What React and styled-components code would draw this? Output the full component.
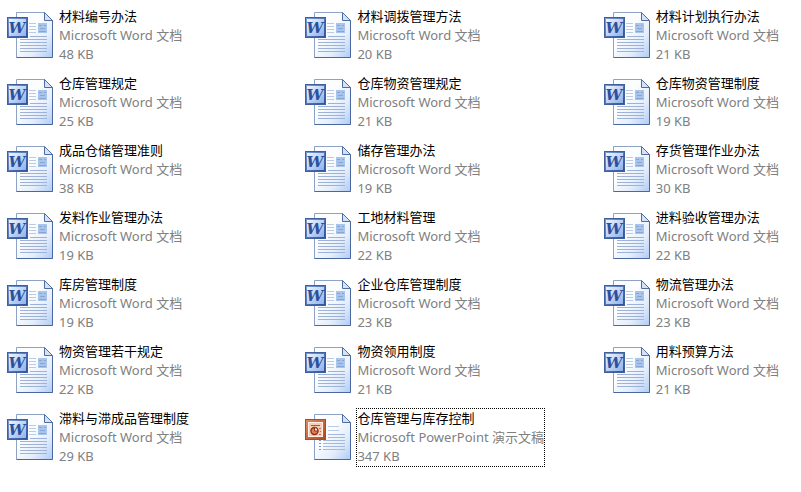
import React, { useState } from "react";
import styled, { createGlobalStyle } from "styled-components";

const files = [
  { name: "材料编号办法", size: "48 KB" },
  { name: "材料调拨管理方法", size: "20 KB" },
  { name: "材料计划执行办法", size: "21 KB" },
  { name: "仓库管理规定", size: "25 KB" },
  { name: "仓库物资管理规定", size: "21 KB" },
  { name: "仓库物资管理制度", size: "19 KB" },
  { name: "成品仓储管理准则", size: "38 KB" },
  { name: "储存管理办法", size: "19 KB" },
  { name: "存货管理作业办法", size: "30 KB" },
  { name: "发料作业管理办法", size: "19 KB" },
  { name: "工地材料管理", size: "22 KB" },
  { name: "进料验收管理办法", size: "22 KB" },
  { name: "库房管理制度", size: "19 KB" },
  { name: "企业仓库管理制度", size: "23 KB" },
  { name: "物流管理办法", size: "23 KB" },
  { name: "物资管理若干规定", size: "22 KB" },
  { name: "物资领用制度", size: "21 KB" },
  { name: "用料预算方法", size: "21 KB" },
  { name: "滞料与滞成品管理制度", size: "29 KB" },
  { name: "仓库管理与库存控制", size: "347 KB", kind: "ppt" },
];

const typeNames = {
  word: "Microsoft Word 文档",
  ppt: "Microsoft PowerPoint 演示文稿",
};

const Page = () => (
  <>
    <path d="M10.5 1.5H38.5L46.5 9.5V46.5H10.5Z" fill="url(#paper)" stroke="#8da2c4" />
    <path d="M46.5 9.5V46.5H10.5" fill="none" stroke="#4a689f" />
    <path d="M38.5 1.5V9.5H46.5Z" fill="#d3e2f8" stroke="#4f6da3" strokeLinejoin="round" />
  </>
);

const WordIcon = () => (
  <Icon viewBox="0 0 48 48" aria-hidden="true">
    <Page />
    <path
      d="M23 12.5H30M23 15.5H30M23 18.5H30M23 21.5H30"
      stroke="#bccbe4"
    />
    <path
      d="M24 25.5H41M14 28.5H41M14 31.5H41M14 34.5H41M14 37.5H41M14 40.5H41"
      stroke="#9db2d6"
    />
    <rect x="32" y="12" width="9" height="10" fill="#a9c4ea" />
    <path d="M33 14.5H36M38 14.5H40M34 17.5H39M33 20.5H40" stroke="#86a6d8" />
    <rect x="1.5" y="6.5" width="20" height="20" fill="url(#blue)" stroke="#3f5f9f" />
    <rect x="3" y="8" width="17" height="17" fill="url(#badge)" />
    <WordLetter x="11" y="22" textAnchor="middle">
      W
    </WordLetter>
  </Icon>
);

const PowerPointIcon = () => (
  <Icon viewBox="0 0 48 48" aria-hidden="true">
    <Page />
    <path d="M24 13.5H35M24 17.5H35" stroke="#bccbe4" />
    <path
      d="M24 21.5H41M24 24.5H41M19 27.5H41M19 30.5H41M19 33.5H41M19 36.5H41"
      stroke="#a5b9dc"
    />
    <path d="M15 27.5H17M15 30.5H17M15 33.5H17M15 36.5H17" stroke="#7895c8" />
    <rect x="1.5" y="6.5" width="20" height="20" fill="url(#orange)" stroke="#9a5034" />
    <rect x="4.5" y="9.5" width="14" height="14" fill="#f6cdb6" stroke="#fff1e6" />
    <path d="M7 12.5H16" stroke="#bd4f29" />
    <circle cx="10.5" cy="18" r="3.5" fill="#dd7f59" stroke="#8f3018" strokeWidth="1.4" />
    <path d="M10.5 18V14.5A3.5 3.5 0 0 1 14 18Z" fill="#fdeee3" stroke="#8f3018" />
    <path d="M15 15.5H17M16 18.5H17M15 21.5H17" stroke="#c8704d" />
  </Icon>
);

const FileTile = ({ file, focused, onSelect }) => {
  const kind = file.kind || "word";

  return (
    <li>
      <Tile type="button" onClick={onSelect}>
        {kind === "ppt" ? <PowerPointIcon /> : <WordIcon />}
        <Label $focused={focused}>
          <Name>{file.name}</Name>
          <Detail>{typeNames[kind]}</Detail>
          <Detail>{file.size}</Detail>
        </Label>
      </Tile>
    </li>
  );
};

const App = () => {
  const [focused, setFocused] = useState(files.length - 1);

  return (
    <>
      <GlobalStyle />
      <Gradients aria-hidden="true">
        <defs>
          <linearGradient id="paper" x1="0" y1="0" x2="1" y2="1">
            <stop offset="0.4" stopColor="#fbfdff" />
            <stop offset="0.7" stopColor="#e3edfc" />
            <stop offset="1" stopColor="#aecbf5" />
          </linearGradient>
          <linearGradient id="blue" x1="0" y1="0" x2="1" y2="1">
            <stop offset="0" stopColor="#7d9edb" />
            <stop offset="1" stopColor="#2c4f9c" />
          </linearGradient>
          <linearGradient id="badge" x1="0" y1="0" x2="1" y2="1">
            <stop offset="0" stopColor="#f0f6ff" />
            <stop offset="1" stopColor="#8fb2ea" />
          </linearGradient>
          <linearGradient id="orange" x1="0" y1="0" x2="1" y2="1">
            <stop offset="0" stopColor="#e08a62" />
            <stop offset="1" stopColor="#b04a22" />
          </linearGradient>
        </defs>
      </Gradients>
      <FileList>
        {files.map((file, index) => (
          <FileTile
            key={file.name}
            file={file}
            focused={index === focused}
            onSelect={() => setFocused(index)}
          />
        ))}
      </FileList>
    </>
  );
};

export default App;

const GlobalStyle = createGlobalStyle`
  body {
    margin: 0;
    background-color: #fff;
    font-family: "Noto Sans", "Noto Sans CJK SC", sans-serif;
    font-size: 13px;
    line-height: 19px;
  }
`;

const Gradients = styled.svg`
  position: absolute;
  width: 0;
  height: 0;
`;

const FileList = styled.ul`
  display: grid;
  grid-template-columns: 1fr 1fr auto;
  row-gap: 10px;
  margin: 0;
  padding: 7px 22px 7px 6px;
  list-style: none;
`;

const Tile = styled.button`
  display: flex;
  gap: 5px;
  padding: 0;
  border: none;
  background: none;
  color: #000;
  font: inherit;
  text-align: left;
  white-space: nowrap;
  outline: none;
`;

const Icon = styled.svg`
  flex: none;
  width: 48px;
  height: 48px;
  margin-top: 4px;
  fill: none;
`;

const WordLetter = styled.text`
  fill: #2d509c;
  font-family: "DejaVu Serif", serif;
  font-size: 15px;
  font-style: italic;
  font-weight: bold;
`;

const Label = styled.span`
  display: flex;
  flex-direction: column;
  outline: ${({ $focused }) => ($focused ? "1px dotted #000" : "none")};
`;

const Name = styled.span`
  color: #000;
`;

const Detail = styled.span`
  color: #808080;
`;
